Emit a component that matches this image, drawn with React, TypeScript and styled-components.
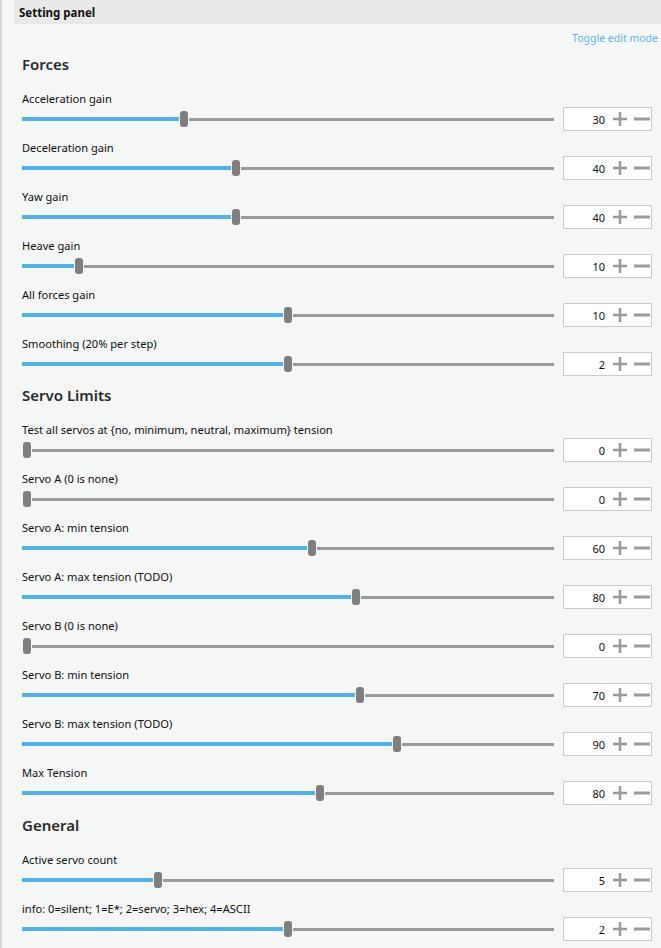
import React from 'react';
import styled, { createGlobalStyle } from 'styled-components';

const Global = createGlobalStyle`
    html, body {
        margin: 0;
        padding: 0;
        background: #f5f6f6;
    }
    body {
        font-family: "Noto Sans", "Open Sans", sans-serif;
        color: #1a1a1a;
    }
`

const Frame = styled.div`
    width: 661px;
    min-height: 948px;
    box-sizing: border-box;
    border-left: 2px solid #d6d6d6;
    background: #f5f6f6;
`

const TitleBar = styled.div`
    margin-left: 12px;
    height: 24px;
    background: #e9e9e9;
    display: flex;
    align-items: center;
    padding-left: 5px;
    font-size: 11.5px;
    font-weight: 700;
    color: #111;
`

const ToggleRow = styled.div`
    display: flex;
    justify-content: flex-end;
    padding-right: 3px;
    margin-top: 7px;
    height: 14px;
    line-height: 14px;
`

const ToggleLink = styled.a`
    font-size: 10.5px;
    color: #5db5f2;
    cursor: pointer;
`

const Content = styled.div`
    padding: 9px 0 0 20px;
`

const SectionTitle = styled.h2<{ $pad?: number }>`
    margin: 0 0 17px 0;
    padding-top: ${p => p.$pad ?? 0}px;
    height: 20px;
    line-height: 20px;
    font-size: 15px;
    font-weight: 600;
    color: #2c2c2c;
`

const Row = styled.div`
    margin-bottom: 9px;
`

const Label = styled.div`
    height: 16px;
    line-height: 16px;
    font-size: 11.1px;
    color: #111;
`

const Controls = styled.div`
    display: flex;
    align-items: center;
    height: 24px;
`

const Track = styled.div`
    width: 532px;
    height: 16px;
    display: flex;
    align-items: center;
`

const Filled = styled.div`
    height: 4px;
    background: #4fb3ea;
`

const Rest = styled.div`
    flex: 1;
    height: 3px;
    background: #9a9a9a;
`

const Thumb = styled.div`
    width: 8px;
    height: 16px;
    border-radius: 3px;
    background: #7f7f7f;
    margin: 0 1px;
    flex-shrink: 0;
`

const ValueBox = styled.div`
    margin-left: 9px;
    width: 89px;
    height: 24px;
    box-sizing: border-box;
    border: 1px solid #cbcbcb;
    background: #fff;
    display: flex;
    align-items: center;
    padding-right: 1px;
`

const Value = styled.span`
    flex: 1;
    text-align: right;
    font-size: 11px;
    color: #111;
    padding-right: 8px;
`

const IconBtn = styled.span<{ $gap?: number }>`
    display: flex;
    align-items: center;
    justify-content: center;
    height: 16px;
    margin-right: ${p => p.$gap ?? 0}px;
    cursor: pointer;
`

const Plus = () => (
    <svg width="14" height="16" viewBox="0 0 14 16">
        <path d="M0 8h14M7 1v14" stroke="#9b9b9b" strokeWidth="2.6" />
    </svg>
)

const Minus = () => (
    <svg width="16" height="16" viewBox="0 0 16 16">
        <path d="M0 8h16" stroke="#9b9b9b" strokeWidth="3" />
    </svg>
)

interface ISetting {
    label: string
    value: number
    ratio: number
}

const forces: ISetting[] = [
    { label: 'Acceleration gain', value: 30, ratio: 0.3 },
    { label: 'Deceleration gain', value: 40, ratio: 0.4 },
    { label: 'Yaw gain', value: 40, ratio: 0.4 },
    { label: 'Heave gain', value: 10, ratio: 0.1 },
    { label: 'All forces gain', value: 10, ratio: 0.5 },
    { label: 'Smoothing (20% per step)', value: 2, ratio: 0.5 },
]

const servo: ISetting[] = [
    { label: 'Test all servos at {no, minimum, neutral, maximum} tension', value: 0, ratio: 0 },
    { label: 'Servo A (0 is none)', value: 0, ratio: 0 },
    { label: 'Servo A: min tension', value: 60, ratio: 0.546 },
    { label: 'Servo A: max tension (TODO)', value: 80, ratio: 0.63 },
    { label: 'Servo B (0 is none)', value: 0, ratio: 0 },
    { label: 'Servo B: min tension', value: 70, ratio: 0.637 },
    { label: 'Servo B: max tension (TODO)', value: 90, ratio: 0.708 },
    { label: 'Max Tension', value: 80, ratio: 0.561 },
]

const general: ISetting[] = [
    { label: 'Active servo count', value: 5, ratio: 0.25 },
    { label: 'info: 0=silent; 1=E*; 2=servo; 3=hex; 4=ASCII', value: 2, ratio: 0.5 },
]

function SettingRow({ label, value, ratio }: ISetting) {
    // 532 track - 10 thumb slot
    const filled = Math.round(ratio * 522)
    return (
        <Row>
            <Label>{label}</Label>
            <Controls>
                <Track>
                    <Filled style={{ width: filled }} />
                    <Thumb />
                    <Rest />
                </Track>
                <ValueBox>
                    <Value>{value}</Value>
                    <IconBtn $gap={7}><Plus /></IconBtn>
                    <IconBtn><Minus /></IconBtn>
                </ValueBox>
            </Controls>
        </Row>
    )
}

function App() {
    return (
        <>
            <Global />
            <Frame>
                <TitleBar>Setting panel</TitleBar>
                <ToggleRow>
                    <ToggleLink>Toggle edit mode</ToggleLink>
                </ToggleRow>
                <Content>
                    <SectionTitle>Forces</SectionTitle>
                    {forces.map(s => <SettingRow key={s.label} {...s} />)}
                    <SectionTitle>Servo Limits</SectionTitle>
                    {servo.map(s => <SettingRow key={s.label} {...s} />)}
                    <SectionTitle $pad={1}>General</SectionTitle>
                    {general.map(s => <SettingRow key={s.label} {...s} />)}
                </Content>
            </Frame>
        </>
    )
}

export default App
